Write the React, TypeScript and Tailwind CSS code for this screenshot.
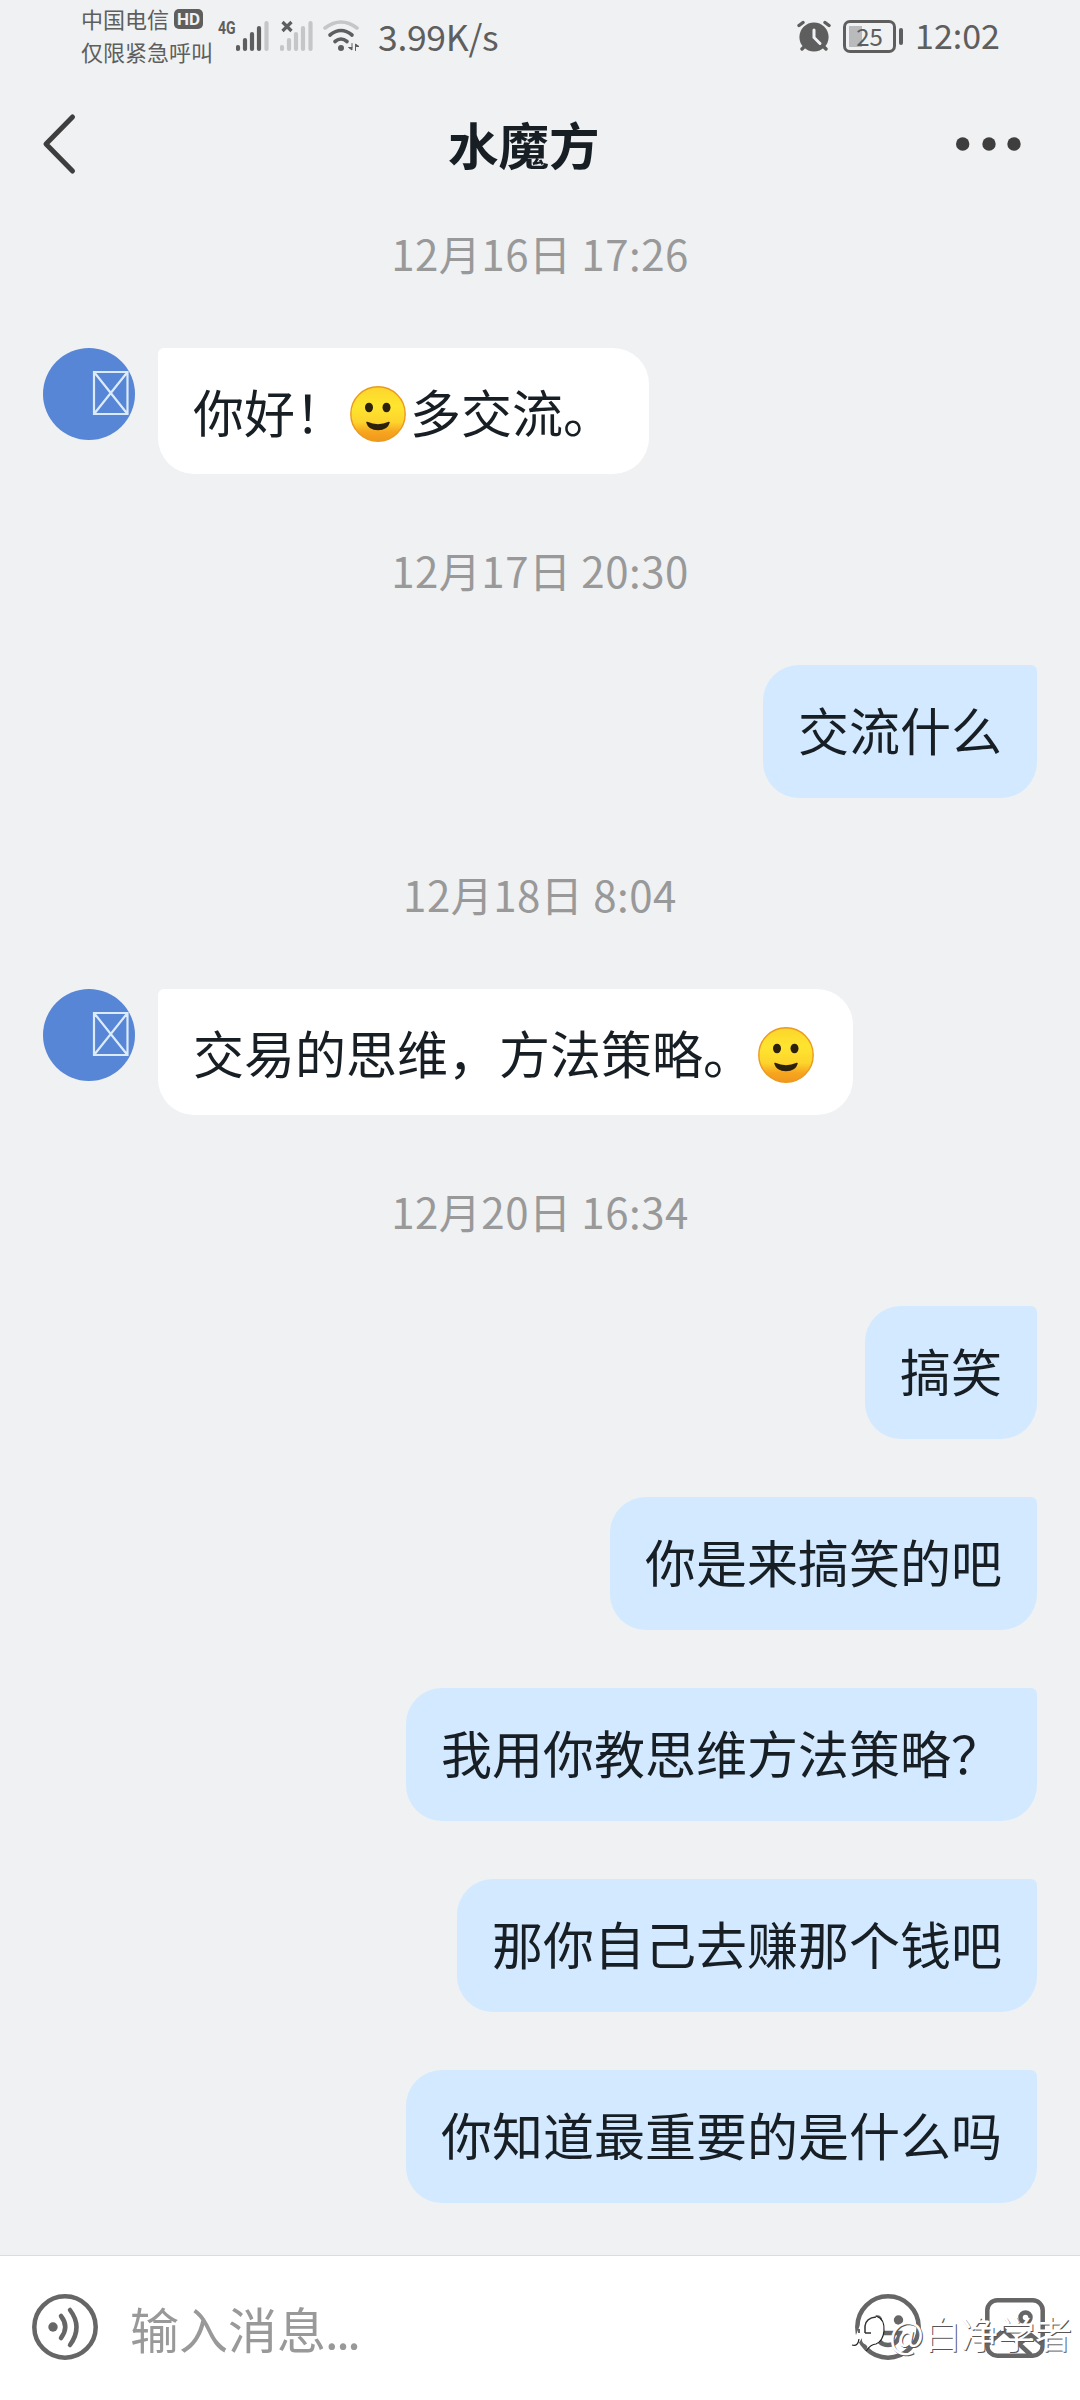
import React from 'react';

type Entry =
  | { kind: 'time'; text: string; className: string }
  | { kind: 'received'; parts: string[]; className: string }
  | { kind: 'sent'; text: string; className: string };

const EMOJI = ':smile:';

const entries: Entry[] = [
  { kind: 'time', text: '12月16日 17:26', className: 'mt-[39px]' },
  { kind: 'received', parts: ['你好！', EMOJI, '多交流。'], className: 'mt-[65px]' },
  { kind: 'time', text: '12月17日 20:30', className: 'mt-[66px]' },
  { kind: 'sent', text: '交流什么', className: 'mt-[65px]' },
  { kind: 'time', text: '12月18日 8:04', className: 'mt-[66px]' },
  { kind: 'received', parts: ['交易的思维，方法策略。', EMOJI], className: 'mt-[65px]' },
  { kind: 'time', text: '12月20日 16:34', className: 'mt-[66px]' },
  { kind: 'sent', text: '搞笑', className: 'mt-[65px]' },
  { kind: 'sent', text: '你是来搞笑的吧', className: 'mt-[58px]' },
  { kind: 'sent', text: '我用你教思维方法策略？', className: 'mt-[58px]' },
  { kind: 'sent', text: '那你自己去赚那个钱吧', className: 'mt-[58px]' },
  { kind: 'sent', text: '你知道最重要的是什么吗', className: 'mt-[58px]' },
];

const SmileEmoji = () => (
  <svg className="mt-[5px] mr-[3px] ml-[3px] h-[58px] w-[58px] shrink-0" viewBox="0 0 58 58">
    <defs>
      <linearGradient id="face" x1="0" y1="0" x2="0" y2="1">
        <stop offset="0" stopColor="#fbd52b" />
        <stop offset="0.35" stopColor="#ffe52f" />
        <stop offset="0.65" stopColor="#fdd42c" />
        <stop offset="0.83" stopColor="#f7a51f" />
        <stop offset="1" stopColor="#f0981c" />
      </linearGradient>
    </defs>
    <circle cx="29" cy="29" r="27.2" fill="url(#face)" stroke="#eb9a1e" strokeWidth="1.4" />
    <ellipse cx="20" cy="22.500" rx="4" ry="4.8" fill="#2b210c" />
    <ellipse cx="37.5" cy="22.500" rx="4" ry="4.8" fill="#2b210c" />
    <path d="M18 37.500Q29 42.500 40 37.500Q38 44.500 29 44.500Q20 44.500 18 37.500Z" fill="#2b210c" stroke="#2b210c" strokeWidth="1.5" strokeLinejoin="round" />
  </svg>
);

const Avatar = () => (
  <svg className="h-[92px] w-[92px] shrink-0" viewBox="0 0 92 92">
    <circle cx="46" cy="46" r="46" fill="#5686d5" />
    <path d="M51 24H84.500V66H51ZM51 24L84.500 66M84.500 24L51 66" fill="none" stroke="#dcebfb" strokeWidth="2.200" />
  </svg>
);

const bars = [
  { x: 2, top: 27 },
  { x: 9, top: 20 },
  { x: 16, top: 14 },
  { x: 23, top: 8 },
  { x: 30.5, top: 3 },
];

const Signal = ({ active }: { active: number }) => (
  <svg className="h-[32px] w-[34px]" viewBox="0 0 34 32">
    {bars.map((bar, i) => (
      <path key={bar.x} d={`M${bar.x} ${bar.top}V29`} stroke={i < active ? '#5e5e5e' : '#c5c6c7'} strokeWidth="4.200" strokeLinecap="round" />
    ))}
    {active === 0 && <path d="M2.500 2L11.500 11M11.500 2L2.500 11" stroke="#5e5e5e" strokeWidth="3.200" />}
  </svg>
);

const StatusBar = () => (
  <div className="flex h-[80px] shrink-0 items-start pl-[81px] text-[#5e5e5e]">
    <div className="flex w-[137px] flex-col pt-[2px] text-[22px] leading-[33px] whitespace-nowrap">
      <div className="flex items-center">
        <span>中国电信</span>
        <span className="ml-[5px] flex h-[20px] w-[29px] items-center justify-center rounded-[5px] bg-[#5e5e5e] font-['Roboto'] text-[17px] leading-[20px] font-bold text-[#eff1f4]">HD</span>
      </div>
      <div>仅限紧急呼叫</div>
    </div>
    <span className="mt-[19px] w-[18px] font-['Roboto'] text-[18px] leading-[18px] font-bold">
      <span className="inline-block origin-left scale-x-[0.78]">4G</span>
    </span>
    <div className="mt-[20px] flex">
      <Signal active={4} />
      <div className="w-[10px]" />
      <Signal active={0} />
    </div>
    <svg className="mt-[18px] ml-[8px] h-[34px] w-[40px]" viewBox="0 0 40 34" fill="none" strokeLinecap="round" strokeWidth="3.600">
      <path d="M3 10Q19 -2 35 10" stroke="#c5c6c7" />
      <path d="M8 17Q19 8 30 17" stroke="#5e5e5e" />
      <path d="M13 23.500Q19 18.500 25 23.500" stroke="#5e5e5e" />
      <circle cx="19" cy="30" r="3" fill="#5e5e5e" stroke="none" />
      <path d="M30 25.500V32L26.500 29.500H30M33.500 32.500V26L37 28.500H33.500" fill="#5e5e5e" stroke="#5e5e5e" strokeWidth="1" />
    </svg>
    <span className="mt-[15px] ml-[16px] text-[35.500px] leading-[42px] tracking-[-0.300px] whitespace-nowrap">3.99K/s</span>
    <svg className="mt-[20px] ml-auto h-[32px] w-[34px]" viewBox="0 0 34 32" fill="none" strokeLinecap="round">
      <circle cx="17" cy="17" r="14.600" fill="#5e5e5e" />
      <path d="M2 5.500L6 2.500M32 5.500L28 2.500M5 29L8 26M29 29L26 26" stroke="#5e5e5e" strokeWidth="3.400" />
      <path d="M17 10V17.500L23 23.500" stroke="#eff1f4" strokeWidth="3" />
    </svg>
    {/* battery */}
    <div className="mt-[20px] ml-[12px] flex items-center">
      <div className="flex h-[33px] w-[53px] items-center justify-center rounded-[7px] border-[3px] border-[#5e5e5e] bg-[linear-gradient(#b9babc,#b9babc)] bg-size-[13px_21px] bg-position-[3px_3px] bg-no-repeat text-[24px] leading-[27px]">
        <span className="-mt-[2px]">25</span>
      </div>
      <div className="ml-[3px] h-[17px] w-[4px] rounded-full bg-[#5e5e5e]" />
    </div>
    <span className="mt-[14px] mr-[80px] ml-[12px] text-[34px] leading-[42px]">12:02</span>
  </div>
);

const Header = () => (
  <div className="flex h-[128px] shrink-0 items-center px-[42px]">
    <svg className="h-[62px] w-[36px]" viewBox="0 0 36 62" fill="none" stroke="#3e3e3e" strokeWidth="5" strokeLinecap="round" strokeLinejoin="round">
      <path d="M30.500 4L4 31L30.500 58" />
    </svg>
    <h1 className="mr-auto ml-[370px] pb-[2px] text-[50.500px] leading-[60px] font-bold text-[#171e24]">水魔方</h1>
    <svg className="mr-[17px] h-[14px] w-[65px]" viewBox="0 0 65 14" fill="#3e3e3e">
      <circle cx="6.700" cy="7" r="6.700" />
      <circle cx="33" cy="7" r="6.700" />
      <circle cx="58" cy="7" r="6.700" />
    </svg>
  </div>
);

const MessageRow = ({ entry }: { entry: Entry }) => {
  if (entry.kind === 'time') {
    return <div className={`${entry.className} h-[60px] text-center text-[42px] leading-[60px] tracking-[0.500px] text-[#999]`}>{entry.text}</div>;
  }
  if (entry.kind === 'sent') {
    return (
      <div className={`${entry.className} flex justify-end`}>
        <div className="flex h-[133px] items-center rounded-[36px] rounded-tr-[6px] bg-[#d2e9ff] px-[35px] pb-[4px] text-[51px] text-[#171e24]">{entry.text}</div>
      </div>
    );
  }
  return (
    <div className={`${entry.className} flex items-start gap-[23px]`}>
      <Avatar />
      <div className="flex h-[126px] items-center rounded-[36px] rounded-tl-[6px] bg-white px-[35px] text-[51px] text-[#171e24]">
        {entry.parts.map((part, i) => (part === EMOJI ? <SmileEmoji key={i} /> : <span key={i}>{part}</span>))}
      </div>
    </div>
  );
};

const Watermark = () => (
  <div className="absolute top-[53px] right-[8px] flex items-center text-white">
    <svg className="mr-[2px] h-[44px] w-[38px]" viewBox="0 0 38 44" fill="none">
      <path d="M13 10Q18 4 27 5Q36 8 35 20Q34 30 27 33Q22 33 17 40L19 34Q12 33 13 27Q9 35 3 34L9 19Z" fill="#fff" />
      <path d="M27 5Q36 8 35 20Q34 30 27 33Q22 33 17 40M3 34Q9 36 10 28" stroke="#222" strokeWidth="1.200" />
      <path d="M10 18V22M16 22V15Q17 7 27 6M16 22H22" stroke="#333" strokeWidth="1.500" />
    </svg>
    <span className="text-[37px] leading-[48px] [text-shadow:1px_1px_0_#555]">@白净学者</span>
  </div>
);

const InputBar = () => (
  <div className="relative flex h-[145px] shrink-0 items-center border-t border-[#dcdcdc] bg-white pl-[32px]">
    <svg className="-mt-[2px] h-[66px] w-[66px]" viewBox="0 0 66 66" fill="none" stroke="#666" strokeWidth="4.500" strokeLinecap="round">
      <circle cx="33" cy="33" r="30.700" />
      <circle cx="21" cy="33" r="4.700" fill="#666" stroke="none" />
      <path d="M29 22Q37.500 33 29 44M38 16Q51 33 38 51" />
    </svg>
    <span className="ml-[32px] text-[49px] leading-[60px] text-[#999]">
      输入消息<span className="ml-[-1px] tracking-[-2.500px]">...</span>
    </span>
    <svg className="-mt-[2px] ml-auto h-[66px] w-[66px]" viewBox="0 0 66 66" fill="none" stroke="#666" strokeWidth="4.500">
      <circle cx="33" cy="33" r="30.700" />
      <circle cx="22.500" cy="26" r="4.700" fill="#666" stroke="none" />
      <circle cx="43.500" cy="26" r="4.700" fill="#666" stroke="none" />
      <path d="M21 39H45Q43 51 33 51Q23 51 21 39Z" />
    </svg>
    <svg className="mr-[35px] ml-[64px] h-[60px] w-[60px]" viewBox="0 0 60 60" fill="none" stroke="#666" strokeWidth="4.500">
      <rect x="2.300" y="2.300" width="55.400" height="55.400" rx="10" />
      <circle cx="40.500" cy="19.500" r="5" />
      <path d="M3 46L19 32L46 57M34 46L46 37L57 46" />
    </svg>
    <Watermark />
  </div>
);

const App: React.FC = () => {
  return (
    <div className="flex h-[2400px] w-[1080px] flex-col overflow-hidden bg-[#eff1f3] font-['Noto_Sans_CJK_SC',sans-serif]">
      <StatusBar />
      <Header />
      <div className="-mt-[24px] flex-1 px-[43px]">
        {entries.map((entry, i) => (
          <MessageRow key={i} entry={entry} />
        ))}
      </div>
      <InputBar />
    </div>
  );
};

export default App;
